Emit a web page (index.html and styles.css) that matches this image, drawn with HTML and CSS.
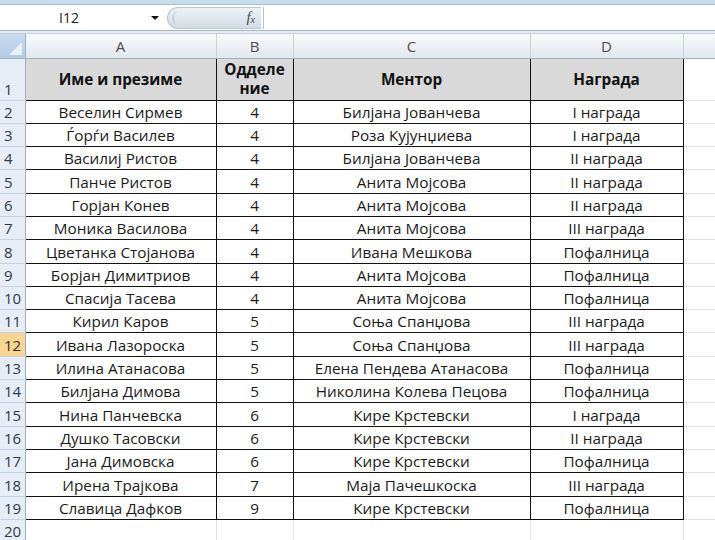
FILE: index.html
```html
<!DOCTYPE html>
<html>
<head>
<meta charset="utf-8">
<link rel="stylesheet" href="styles.css">
</head>
<body>
<div class="app">
  <div class="topstrip"></div>
  <div class="fbar">
    <div class="namebox"><span class="cellref">I12</span><span class="dd"></span></div>
    <div class="pill"><span class="dot"></span><span class="fx">f<sub>x</sub></span></div>
    <div class="sep"></div>
    <div class="finput"></div>
  </div>
  <div class="divider"></div>
  <table class="sheet">
    <colgroup>
      <col class="c-rh"><col class="c-a"><col class="c-b"><col class="c-c"><col class="c-d"><col class="c-e">
    </colgroup>
    <thead>
      <tr class="colhead">
        <th class="corner"><span class="tri"></span></th><th>A</th><th>B</th><th>C</th><th>D</th><th class="last"></th>
      </tr>
    </thead>
    <tbody id="body">
      <tr class="r1">
        <th class="rh">1</th>
        <td class="hd">Име и презиме</td>
        <td class="hd">Одделе<br>ние</td>
        <td class="hd">Ментор</td>
        <td class="hd">Награда</td>
        <td class="empty"></td>
      </tr>
      <tr><th class="rh">2</th><td>Веселин Сирмев</td><td>4</td><td>Билјана Јованчева</td><td>I награда</td><td class="empty"></td></tr>
      <tr><th class="rh">3</th><td>Ѓорѓи Василев</td><td>4</td><td>Роза Кујунџиева</td><td>I награда</td><td class="empty"></td></tr>
      <tr><th class="rh">4</th><td>Василиј Ристов</td><td>4</td><td>Билјана Јованчева</td><td>II награда</td><td class="empty"></td></tr>
      <tr><th class="rh">5</th><td>Панче Ристов</td><td>4</td><td>Анита Мојсова</td><td>II награда</td><td class="empty"></td></tr>
      <tr><th class="rh">6</th><td>Горјан Конев</td><td>4</td><td>Анита Мојсова</td><td>II награда</td><td class="empty"></td></tr>
      <tr><th class="rh">7</th><td>Моника Василова</td><td>4</td><td>Анита Мојсова</td><td>III награда</td><td class="empty"></td></tr>
      <tr><th class="rh">8</th><td>Цветанка Стојанова</td><td>4</td><td>Ивана Мешкова</td><td>Пофалница</td><td class="empty"></td></tr>
      <tr><th class="rh">9</th><td>Борјан Димитриов</td><td>4</td><td>Анита Мојсова</td><td>Пофалница</td><td class="empty"></td></tr>
      <tr><th class="rh">10</th><td>Спасија Тасева</td><td>4</td><td>Анита Мојсова</td><td>Пофалница</td><td class="empty"></td></tr>
      <tr><th class="rh">11</th><td>Кирил Каров</td><td>5</td><td>Соња Спанџова</td><td>III награда</td><td class="empty"></td></tr>
      <tr><th class="rh sel">12</th><td>Ивана Лазороска</td><td>5</td><td>Соња Спанџова</td><td>III награда</td><td class="empty"></td></tr>
      <tr><th class="rh">13</th><td>Илина Атанасова</td><td>5</td><td>Елена Пендева Атанасова</td><td>Пофалница</td><td class="empty"></td></tr>
      <tr><th class="rh">14</th><td>Билјана Димова</td><td>5</td><td>Николина Колева Пецова</td><td>Пофалница</td><td class="empty"></td></tr>
      <tr><th class="rh">15</th><td>Нина Панчевска</td><td>6</td><td>Кире Крстевски</td><td>I награда</td><td class="empty"></td></tr>
      <tr><th class="rh">16</th><td>Душко Тасовски</td><td>6</td><td>Кире Крстевски</td><td>II награда</td><td class="empty"></td></tr>
      <tr><th class="rh">17</th><td>Јана Димовска</td><td>6</td><td>Кире Крстевски</td><td>Пофалница</td><td class="empty"></td></tr>
      <tr><th class="rh">18</th><td>Ирена Трајкова</td><td>7</td><td>Маја Пачешкоска</td><td>III награда</td><td class="empty"></td></tr>
      <tr><th class="rh">19</th><td>Славица Дафков</td><td>9</td><td>Кире Крстевски</td><td>Пофалница</td><td class="empty"></td></tr>
      <tr class="blank"><th class="rh">20</th><td></td><td></td><td></td><td></td><td class="empty"></td></tr>
    </tbody>
  </table>
</div>
</body>
</html>
```
FILE: styles.css
```css
html, body {
  margin: 0;
  padding: 0;
  background: #ffffff;
}
body {
  width: 715px;
  height: 540px;
  overflow: hidden;
  font-family: "Open Sans", "Noto Sans", sans-serif;
  color: #1e1e1e;
}
.app {
  display: flex;
  flex-direction: column;
  width: 715px;
}
.topstrip {
  height: 4px;
  background: #c9dcee;
  border-bottom: 1px solid #a9c0d8;
}
.fbar {
  height: 25px;
  display: flex;
  align-items: center;
  background: #fff;
}
.namebox {
  width: 165px;
  height: 25px;
  display: flex;
  align-items: center;
  position: relative;
  box-sizing: border-box;
}
.cellref {
  margin-left: 59px;
  font-size: 14px;
  color: #222;
}
.dd {
  position: absolute;
  left: 151px;
  top: 11px;
  width: 0;
  height: 0;
  border-left: 4px solid transparent;
  border-right: 4px solid transparent;
  border-top: 4px solid #111;
}
.pill {
  width: 94px;
  height: 22px;
  margin-left: 2px;
  border-radius: 11px 0 0 11px;
  background: linear-gradient(#eef2f7, #d3dce7);
  border: 1px solid #b9c5d3;
  border-right: none;
  box-sizing: border-box;
  position: relative;
  display: flex;
  align-items: center;
  justify-content: flex-end;
}
.dot {
  position: absolute;
  left: 4px;
  top: 3px;
  width: 10px;
  height: 14px;
  border-radius: 50%;
  border-left: 2px solid #c7d0da;
}
.fx {
  font-family: "Liberation Serif", "DejaVu Serif", serif;
  font-style: italic;
  font-size: 15px;
  color: #4a4a4a;
  margin-right: 6px;
  line-height: 1;
}
.fx sub {
  font-size: 10px;
  vertical-align: -1px;
}
.sep {
  width: 1px;
  height: 22px;
  background: #b8c2cd;
  margin-left: 2px;
}
.finput {
  flex: 1;
  height: 25px;
  background: #fff;
}
.divider {
  height: 4px;
  background: #e4eaf1;
  border-top: 1px solid #a8b6c6;
  border-bottom: 1px solid #c5d0dc;
  box-sizing: border-box;
}
.sheet {
  border-collapse: collapse;
  table-layout: fixed;
  width: 715px;
  font-size: 15.3px;
}
.c-rh { width: 25px; }
.c-a { width: 191px; }
.c-b { width: 77px; }
.c-c { width: 237px; }
.c-d { width: 153px; }
.c-e { width: 32px; }

.colhead th {
  height: 24px;
  padding: 0;
  font-weight: normal;
  color: #4d4d4d;
  font-size: 15px;
  background: linear-gradient(#f8f9fb, #e1e7ee);
  border-left: 1px solid #c8d1dc;
  border-bottom: 1px solid #9fb0c3;
  text-align: center;
  line-height: 22px;
  box-sizing: border-box;
}
.colhead th.corner {
  background: linear-gradient(#c7daef, #b4cbe5);
  border-left: none;
  border-right: 1px solid #9fb0c3;
  position: relative;
}
.tri {
  position: absolute;
  right: 3px;
  bottom: 3px;
  width: 0;
  height: 0;
  border-left: 13px solid transparent;
  border-bottom: 13px solid #e9f0f8;
}
.colhead th.last {
  border-right: none;
}

.rh {
  background: #e6edf7;
  border-right: 1px solid #9fb0c3;
  border-bottom: 1px solid #c6d3e3;
  color: #2e3a4a;
  font-weight: normal;
  font-size: 15px;
  text-align: left;
  padding: 0 0 0 4px;
  vertical-align: bottom;
  line-height: 21px;
  box-sizing: border-box;
}
.rh.sel {
  background: #f9d593;
  color: #3a3020;
}
tbody tr {
  height: 23.3px;
}
tbody tr.r1 {
  height: 42px;
}
td {
  padding: 0;
  text-align: center;
  vertical-align: bottom;
  line-height: 21px;
  white-space: nowrap;
  border: 1px solid #111;
  color: #1a1a1a;
}
td.hd {
  background: #d9d9d9;
  font-weight: bold;
  vertical-align: middle;
  line-height: 19px;
  color: #111;
}
td.empty {
  border: none;
  border-left: 1px solid #111;
  border-bottom: 1px solid #e3e3e3;
}
tr.blank td {
  border: none;
  border-right: 1px solid #e3e3e3;
}
tr.blank td.empty {
  border: none;
}
tr.blank td:nth-child(5) {
  border-right: 1px solid #e3e3e3;
}
```
